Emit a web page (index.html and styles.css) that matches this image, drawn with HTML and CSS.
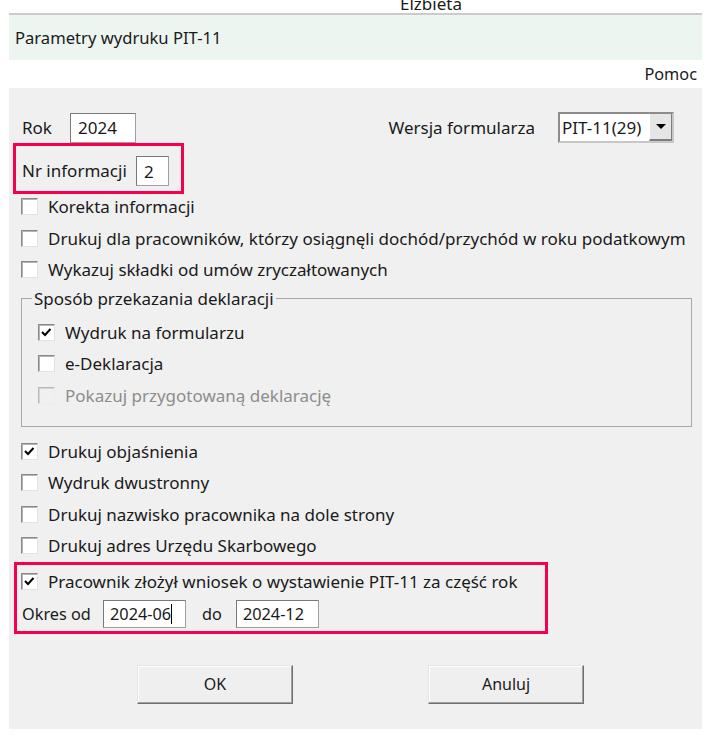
FILE: index.html
```html
<!DOCTYPE html>
<html lang="pl">

<head>
    <meta charset="UTF-8">
    <meta name="viewport" content="width=device-width, initial-scale=1.0">
    <title>Parametry wydruku PIT-11</title>
    <link rel="stylesheet" href="styles.css">
</head>

<body>
    <!-- Okno pod spodem, widoczny tylko dolny skrawek -->
    <div class="owner-strip"><span>Elżbieta</span></div>

    <div class="window">
        <div class="titlebar">Parametry wydruku PIT-11</div>
        <div class="menubar"><span>Pomoc</span></div>

        <div class="dialog">
            <!-- Rok i wersja formularza -->
            <div class="row-top">
                <span class="lbl-rok">Rok</span>
                <div class="edit edit-year">2024</div>
                <div class="spacer"></div>
                <span class="lbl-wersja">Wersja formularza</span>
                <div class="combo">
                    <span class="combo-text">PIT-11(29)</span>
                    <span class="combo-btn"><i class="arrow"></i></span>
                </div>
            </div>

            <!-- Nr informacji (zaznaczone na czerwono) -->
            <div class="mark mark-nr">
                <span class="lbl-nr">Nr informacji</span>
                <div class="edit edit-nr">2</div>
            </div>

            <div class="checks checks-first">
                <div class="check-row"><span class="box"></span>Korekta informacji</div>
                <div class="check-row"><span class="box"></span>Drukuj dla pracowników, którzy osiągnęli dochód/przychód w roku podatkowym</div>
                <div class="check-row"><span class="box"></span>Wykazuj składki od umów zryczałtowanych</div>
            </div>

            <!-- Sposób przekazania -->
            <fieldset class="group">
                <legend>Sposób przekazania deklaracji</legend>
                <div class="group-body">
                    <div class="check-row"><span class="box checked"><svg width="15" height="15" viewBox="0 0 15 15"><path d="M3 7 L6 10 L11.5 4" fill="none" stroke="#000" stroke-width="2"/></svg></span>Wydruk na formularzu</div>
                    <div class="check-row"><span class="box"></span>e-Deklaracja</div>
                    <div class="check-row disabled"><span class="box"></span>Pokazuj przygotowaną deklarację</div>
                </div>
            </fieldset>

            <div class="checks checks-second">
                <div class="check-row"><span class="box checked"><svg width="15" height="15" viewBox="0 0 15 15"><path d="M3 7 L6 10 L11.5 4" fill="none" stroke="#000" stroke-width="2"/></svg></span>Drukuj objaśnienia</div>
                <div class="check-row"><span class="box"></span>Wydruk dwustronny</div>
                <div class="check-row"><span class="box"></span>Drukuj nazwisko pracownika na dole strony</div>
                <div class="check-row"><span class="box"></span>Drukuj adres Urzędu Skarbowego</div>
            </div>

            <!-- Okres (zaznaczone na czerwono) -->
            <div class="mark mark-period">
                <div class="check-row"><span class="box checked"><svg width="15" height="15" viewBox="0 0 15 15"><path d="M3 7 L6 10 L11.5 4" fill="none" stroke="#000" stroke-width="2"/></svg></span>Pracownik złożył wniosek o wystawienie PIT-11 za część rok</div>
                <div class="period-row">
                    <span class="lbl-od">Okres od</span>
                    <div class="edit edit-date">2024-06<i class="caret"></i></div>
                    <span class="lbl-do">do</span>
                    <div class="edit edit-date">2024-12</div>
                </div>
            </div>

            <div class="buttons">
                <button class="btn">OK</button>
                <button class="btn">Anuluj</button>
            </div>
        </div>
    </div>
</body>

</html>
```

FILE: styles.css
```css
body {
    margin: 0;
    background: #fff;
    font-family: "Noto Sans", "Open Sans", sans-serif;
    font-size: 17px;
    color: #1a1a1a;
}

.owner-strip {
    height: 13px;
    overflow: hidden;
    padding-left: 400px;
}

.owner-strip span {
    display: block;
    font-size: 17px;
    line-height: 17px;
    margin-top: -5px;
}

.window {
    margin-left: 9px;
    width: 693px;
}

.titlebar {
    border-top: 2px solid #cbcbcb;
    height: 45px;
    background: #edf5f1;
    padding-left: 6px;
    display: flex;
    align-items: center;
    font-size: 16.6px;
}

.menubar {
    height: 28px;
    background: #fff;
    display: flex;
    justify-content: flex-end;
    align-items: center;
    padding-right: 5px;
    font-size: 16.3px;
}

.dialog {
    background: #f0f0f0;
    height: 641px;
    box-sizing: border-box;
    padding: 24px 28px 0 4px;
}

.row-top {
    display: flex;
    align-items: center;
    height: 31px;
    padding-left: 9px;
}

.lbl-rok {
    width: 48px;
}

.edit {
    background: #fff;
    border: 1px solid;
    border-color: #7a7a7a #a0a0a0 #a0a0a0 #7a7a7a;
    box-sizing: border-box;
    height: 30px;
    padding-left: 7px;
    display: flex;
    align-items: center;
}

.edit-year {
    width: 66px;
}

.spacer {
    flex: 1;
}

.lbl-wersja {
    margin-right: 23px;
}

.combo {
    width: 116px;
    height: 31px;
    box-sizing: border-box;
    border: 2px solid;
    border-color: #8c8c8c #c8c8c8 #c8c8c8 #8c8c8c;
    background: #fff;
    display: flex;
}

.combo-text {
    flex: 1;
    padding-left: 2px;
    display: flex;
    align-items: center;
    white-space: nowrap;
}

.combo-btn {
    width: 23px;
    background: #e6e6e6;
    border-left: 1px solid #fff;
    border-bottom: 2px solid #7e7e7e;
    border-right: 1px solid #7e7e7e;
    box-sizing: border-box;
    display: flex;
    align-items: center;
    justify-content: center;
    flex-shrink: 0;
}

.arrow {
    width: 0;
    height: 0;
    border-left: 5px solid transparent;
    border-right: 5px solid transparent;
    border-top: 5px solid #000;
}

.mark {
    border: 3px solid #f4004c;
    box-sizing: border-box;
}

.mark-nr {
    width: 171px;
    height: 51px;
    display: flex;
    align-items: flex-start;
    padding: 10px 0 0 6px;
}

.lbl-nr {
    width: 114px;
    line-height: 30px;
}

.edit-nr {
    width: 33px;
}

.checks {
    padding-left: 8px;
}

.checks-first {
    margin-top: -3px;
}

.check-row {
    display: flex;
    align-items: center;
    height: 31.5px;
    white-space: nowrap;
}

.box {
    width: 17px;
    height: 17px;
    box-sizing: border-box;
    background: #fff;
    border: 1px solid;
    border-color: #8a8a8a #e2e2e2 #e2e2e2 #8a8a8a;
    box-shadow: inset 1px 1px 0 #b4b4b4;
    margin-right: 10px;
    display: flex;
    align-items: center;
    justify-content: center;
    flex-shrink: 0;
}

.disabled {
    color: #8d8d8d;
}

.disabled .box {
    background: #f0f0f0;
    border-color: #b8b8b8 #ececec #ececec #b8b8b8;
    box-shadow: inset 1px 1px 0 #d4d4d4;
}

.group {
    margin: 5px 0 0 8px;
    width: 671px;
    height: 136px;
    box-sizing: border-box;
    border: 1px solid #a8a8a8;
    padding: 0;
}

.group legend {
    margin-left: 10px;
    padding: 0 2px;
    line-height: 16px;
}

.group-body {
    padding: 10px 0 0 16px;
}

.checks-second {
    margin-top: 9px;
}

.mark-period {
    width: 534px;
    height: 72px;
    margin-left: 1px;
    padding: 1px 0 0 4px;
}

.period-row {
    display: flex;
    align-items: center;
    height: 33px;
    padding-left: 1px;
    font-size: 16.3px;
}

.lbl-od {
    width: 81px;
}

.edit-date {
    width: 83px;
    height: 28px;
    padding-left: 6px;
}

.caret {
    display: inline-block;
    width: 1px;
    height: 20px;
    background: #000;
}

.lbl-do {
    margin: 0 14px 0 16px;
}

.buttons {
    display: flex;
    gap: 135px;
    padding: 31px 0 0 124px;
}

.btn {
    width: 156px;
    height: 39px;
    font-family: inherit;
    font-size: 16px;
    color: #1a1a1a;
    background: #efefef;
    border: 1px solid;
    border-color: #e4e4e4 #6f6f6f #6f6f6f #e4e4e4;
    box-shadow: inset -1px -1px 0 #a0a0a0, inset 1px 1px 0 #fff;
    padding: 0;
}
```
